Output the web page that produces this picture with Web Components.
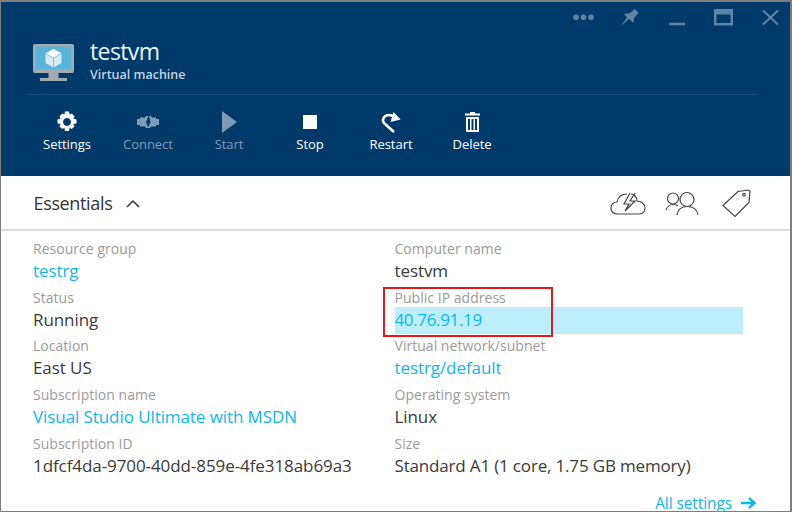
<!DOCTYPE html>
<html><head><meta charset="utf-8"><style>
html,body{margin:0;padding:0;background:#fff}
body{width:792px;height:512px;overflow:hidden;font-family:"Open Sans","Noto Sans",sans-serif}
</style></head><body>
<vm-blade></vm-blade>
<template id="cmd-t"><style>
:host{display:flex;flex-direction:column;align-items:center;width:81px;height:66px;color:#fff;flex:none}
:host([off]){color:#7f9cb6}
.i{height:24px;display:flex;align-items:center;justify-content:center}
.i svg,::slotted(*){display:block}
.l{font:13px/16px "Open Sans",sans-serif;letter-spacing:-.05px;margin-top:2px;white-space:nowrap}
</style><div class="i"><slot name="icon"></slot></div><div class="l"><slot></slot></div></template>
<template id="field-t"><style>
:host{display:block;height:48.7px}
.k{font:14px/20px "Open Sans",sans-serif;letter-spacing:.03px;color:#9a9a9a;white-space:nowrap;height:20px}
.v{font:17px/24px "Open Sans",sans-serif;letter-spacing:-.08px;color:#3a3a3a;white-space:nowrap;height:28.7px}
:host([link]) .v{color:#0db7ec}
:host([tight]) .v{letter-spacing:-.17px}
:host([hl]) .v{background:#bdeefb;width:348px;height:26px;margin-top:-1px;padding-top:1px;letter-spacing:-.35px}
</style><div class="k"><slot name="k"></slot></div><div class="v"><slot></slot></div></template>
<template id="head-t"><style>
:host{display:block;height:174px;background:#003a6b;color:#fff;box-sizing:border-box;position:relative}
.top{height:27px;display:flex;justify-content:flex-end;align-items:center}
.top svg{display:block}
.title{display:flex;height:65px;margin-left:26px;margin-right:32px;border-bottom:1px solid #154e7e}
.logo{width:42px;margin:15px 15px 0 6px}
.n{font:23px/30px "Open Sans",sans-serif;letter-spacing:-.6px;padding-top:7px;height:30px;color:#eef4f8}
.s{font:600 12.5px/16px "Open Sans",sans-serif;letter-spacing:0;color:#c3d2df;margin-top:1px}
.cmds{display:flex;padding:15px 0 0 25.5px}
</style>
<div class="top"><svg width="272" height="27" viewBox="518 2 272 27">
<g fill="#5f85a5"><circle cx="576" cy="17.300" r="2.800"/><circle cx="583.500" cy="17.300" r="2.800"/><circle cx="591" cy="17.300" r="2.800"/>
<path d="M630 13L635 9L638.500 13L634 18L633.500 23L629 19L621 26L627 17.500L624 14Z"/></g>
<g fill="none" stroke="#5f85a5"><path d="M669 24h16" stroke-width="2.500"/><rect x="715.200" y="10.200" width="16.600" height="14" stroke-width="2.500"/><path d="M714 12.500h19" stroke-width="4"/><path d="M763 10.500l15 14M778 10.500l-15 14" stroke-width="2"/></g></svg></div>
<div class="title"><div class="logo"><svg width="42" height="38" viewBox="0 0 42 38" style="display:block"><rect x="0" y="0" width="41" height="29" rx="2" fill="#a4abb0"/><rect x="2.500" y="2.500" width="36" height="23" fill="#59b4d9"/><path d="M20.500 5l8 4.500v9.500l-8 4.500-8-4.500v-9.500z" fill="#d6edf7"/><path d="M20.500 5l8 4.500-8 4.500-8-4.500z" fill="#fff"/><path d="M20.500 14v9.500M20.500 14l8-4.500M20.500 14l-8-4.500" stroke="#59b4d9" stroke-width=".8"/><path d="M15.500 29h10v5h-10zM7 34h27v3h-27z" fill="#a4abb0"/></svg></div>
<div><div class="n">testvm</div><div class="s">Virtual machine</div></div></div>
<div class="cmds"><slot></slot></div></template>
<template id="blade-t"><style>
:host{display:block;width:792px;height:512px;box-sizing:border-box;border-top:2px solid #7f7f7f;border-left:1px solid #7f7f7f;border-right:2px solid #7f7f7f;border-bottom:1px solid #7f7f7f;position:relative;background:#fff}
.ess{height:53px;border-bottom:2px solid #dcdcdc;display:flex;align-items:center;padding-left:32.500px;padding-right:38px;color:#333;font:18px/24px "Open Sans",sans-serif;letter-spacing:-.35px}
.ess .sp{flex:1}
.ess svg{display:block}
.grid{display:grid;grid-template-columns:361.500px 1fr;padding:8px 0 0 32px}
.all{position:absolute;right:33px;bottom:-1px;font:15.500px/18px "Open Sans",sans-serif;letter-spacing:-.1px;color:#0db7ec;display:flex;align-items:center;gap:8px;white-space:nowrap;height:18px}
.red{position:absolute;left:382px;top:285px;width:166px;height:46px;border:2px solid #e4181f}
</style>
<vm-head><slot name="cmds"></slot></vm-head>
<div class="ess"><span>Essentials</span><svg width="16" height="10" viewBox="0 0 16 10" style="margin-left:13px"><path d="M2 9l6-6 6 6" fill="none" stroke="#333" stroke-width="1.500"/></svg><span class="sp"></span>
<svg width="142" height="32" viewBox="0 0 142 32" fill="none" stroke="#444" stroke-width="1.200"><path d="M17 7C12 7 8 10 7 15C4 15 1 17 1 21C1 25 4 27 8 27H29C32 27 35 25 35 21C35 17 31 14 27 14C27 10 24 7 21 7"/><path d="M20 6L14 17H19L15 24L25 14H20L25 6"/>
<circle cx="63" cy="11.500" r="5.500"/><circle cx="77" cy="12.500" r="7"/><path d="M67 28C68 22 72 19.500 77 19.500C83 19.500 87 22 88 28M56 23C57 20 60 17.500 63 17.500C65 17.500 67 18 68 19"/>
<path d="M128 4.500L113 18.500L125 29.500L139 15.500L140 4L138 3ZM134 6.300a1.300 1.300 0 1 0 .01 0"/></svg></div>
<div class="grid"><slot></slot></div>
<div class="all">All settings <svg width="17" height="14" viewBox="0 0 17 14"><path d="M1 7h13M9 2l5.500 5-5.500 5" fill="none" stroke="#0db7ec" stroke-width="2.400"/></svg></div>
<div class="red"></div></template>
<script>
function def(name,tid){customElements.define(name,class extends HTMLElement{constructor(){super();this.attachShadow({mode:'open'}).appendChild(document.getElementById(tid).content.cloneNode(true))}})}
def('vm-cmd','cmd-t');def('vm-field','field-t');def('vm-head','head-t');def('vm-blade','blade-t');
const cmds=[
['Settings',0,'<svg width="22" height="22" viewBox="0 0 22 22" style="display:block"><path fill="#fff" fill-rule="evenodd" d="M9 0.500h4l.6 3 2.200-.9 2.800 2.800-1.300 2.200 3.200.9v4l-3.200.6 1.300 2.200-2.800 2.800-2.200-1.300-.6 3.200h-4l-.6-3.200-2.200 1.300-2.800-2.800 1.300-2.200-3.200-.6v-4l3.200-.9-1.300-2.200 2.800-2.800 2.200.9zM11 7a4 4 0 1 0 .01 0z"/></svg>'],
['Connect',1,'<svg width="22" height="12" viewBox="0 0 22 12" style="display:block"><path fill="#7f9cb6" d="M0 3h3V1.500h5L9 0h2.500L9 6l2.500 6H9L8 10.500H3V9H0zM12 0h2l1 1.500h4V3h3v6h-3v1.500h-5L13 12h-2l2.500-6z"/></svg>'],
['Start',1,'<svg width="15" height="22" viewBox="0 0 15 22" style="display:block"><path fill="#7f9cb6" d="M0 0l15 11L0 22z"/></svg>'],
['Stop',0,'<svg width="14" height="14" viewBox="0 0 14 14" style="display:block"><rect width="14" height="14" fill="#fff"/></svg>'],
['Restart',0,'<svg width="20" height="21" viewBox="0 0 20 21" style="display:block"><path fill="none" stroke="#fff" stroke-width="2.600" d="M13 20L3 11C0.500 8 3 3 8 3C11 3 13 4 15 6"/><path fill="#fff" d="M12.500 0L19.500 7.500L9.500 10z"/></svg>'],
['Delete',0,'<svg width="15" height="20" viewBox="0 0 15 20" style="display:block"><path fill="#fff" fill-rule="evenodd" d="M5 0h5v1.500h5V3.500H0V1.500h5zM1 5H14V20H1zM3 7v11h2v-11zM6.500 7v11h2v-11zM10 7v11h2v-11z"/></svg>']];
const b=document.querySelector('vm-blade');
let h='';
for(const c of cmds)h+=`<vm-cmd slot="cmds" ${c[1]?'off':''}><span slot="icon">${c[2]}</span>${c[0]}</vm-cmd>`;
const f=[['Resource group','testrg',1],['Computer name','testvm'],['Status','Running'],['Public IP address','40.76.91.19',1,1],['Location','East US'],['Virtual network/subnet','testrg/default',1],['Subscription name','Visual Studio Ultimate with MSDN',1],['Operating system','Linux'],['Subscription ID','1dfcf4da-9700-40dd-859e-4fe318ab69a3'],['Size','Standard A1 (1 core, 1.75 GB memory)',0,0,1]];
for(const x of f)h+=`<vm-field ${x[2]?'link':''} ${x[3]?'hl':''} ${x[4]?'tight':''}><span slot="k">${x[0]}</span>${x[1]}</vm-field>`;
b.innerHTML=h;
</script></body></html>
